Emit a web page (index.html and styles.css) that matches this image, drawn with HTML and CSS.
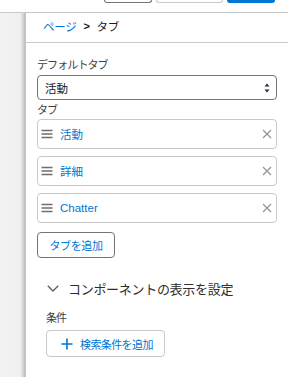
FILE: index.html
```html
<!DOCTYPE html>
<html lang="ja">
<head>
<meta charset="utf-8">
<link rel="stylesheet" href="styles.css">
</head>
<body>
<div class="topbar">
  <div class="tb-btn tb-neutral"></div>
  <div class="tb-btn tb-light"></div>
  <div class="tb-btn tb-brand"></div>
</div>
<div class="main">
  <div class="sidebar"></div>
  <div class="panel">
    <div class="crumbs">
      <span class="crumb-link">ページ</span>
      <span class="crumb-sep">&gt;</span>
      <span class="crumb-cur">タブ</span>
    </div>
    <div class="content">
      <div class="label">デフォルトタブ</div>
      <div class="select">
        <span>活動</span>
        <svg class="sel-arrows" width="6" height="10" viewBox="0 0 6 10"><path d="M3 0.5 L5.5 3.5 H0.5 Z M3 9.5 L5.5 6.5 H0.5 Z" fill="#1b2a3e"/></svg>
      </div>
      <div class="label label-tabs">タブ</div>
      <div class="tab-list">
        <div class="tab-item">
          <svg class="grip" width="12" height="10" viewBox="0 0 12 10"><path d="M0.5 1.5 H11.5 M0.5 5 H11.5 M0.5 8.5 H11.5" stroke="#706e6b" stroke-width="1.3"/></svg>
          <span class="tab-name">活動</span>
          <svg class="remove" width="10" height="10" viewBox="0 0 10 10"><path d="M1 1 L9 9 M9 1 L1 9" stroke="#939393" stroke-width="1.2"/></svg>
        </div>
        <div class="tab-item">
          <svg class="grip" width="12" height="10" viewBox="0 0 12 10"><path d="M0.5 1.5 H11.5 M0.5 5 H11.5 M0.5 8.5 H11.5" stroke="#706e6b" stroke-width="1.3"/></svg>
          <span class="tab-name">詳細</span>
          <svg class="remove" width="10" height="10" viewBox="0 0 10 10"><path d="M1 1 L9 9 M9 1 L1 9" stroke="#939393" stroke-width="1.2"/></svg>
        </div>
        <div class="tab-item">
          <svg class="grip" width="12" height="10" viewBox="0 0 12 10"><path d="M0.5 1.5 H11.5 M0.5 5 H11.5 M0.5 8.5 H11.5" stroke="#706e6b" stroke-width="1.3"/></svg>
          <span class="tab-name">Chatter</span>
          <svg class="remove" width="10" height="10" viewBox="0 0 10 10"><path d="M1 1 L9 9 M9 1 L1 9" stroke="#939393" stroke-width="1.2"/></svg>
        </div>
      </div>
      <button class="btn btn-add-tab">タブを追加</button>
      <div class="section">
        <div class="section-head">
          <svg class="chev" width="12" height="7" viewBox="0 0 12 7"><path d="M0.8 0.8 L6 6 L11.2 0.8" fill="none" stroke="#5c5c5c" stroke-width="1.3"/></svg>
          <span class="section-title">コンポーネントの表示を設定</span>
        </div>
        <div class="section-body">
          <div class="label">条件</div>
          <button class="btn btn-add-cond">
            <svg width="12" height="12" viewBox="0 0 12 12"><path d="M6 0.5 V11.5 M0.5 6 H11.5" stroke="#0176d3" stroke-width="1.6"/></svg>
            <span>検索条件を追加</span>
          </button>
        </div>
      </div>
    </div>
  </div>
</div>
</body>
</html>
```
FILE: styles.css
```css
* { box-sizing: border-box; }
html, body {
  margin: 0;
  padding: 0;
  width: 288px;
  height: 377px;
  overflow: hidden;
  background: #fff;
  font-family: "Liberation Sans", "Noto Sans CJK JP", sans-serif;
  color: #3e3e3c;
}
.topbar {
  height: 13px;
  border-bottom: 1px solid #c9c9c9;
  display: flex;
  justify-content: flex-end;
  align-items: flex-start;
  gap: 4px;
  padding-right: 13px;
}
.tb-btn {
  height: 3px;
  border: 1px solid #747474;
  border-top: none;
  border-radius: 0 0 4px 4px;
}
.tb-neutral { width: 48px; }
.tb-light { width: 67px; border-color: #c9c9c9; }
.tb-brand { width: 48px; background: #0176d3; border-color: #0176d3; }

.main {
  display: flex;
  height: 364px;
}
.sidebar {
  width: 26px;
  flex: none;
  background: linear-gradient(to right, #f3f3f3 0, #f0f0f0 20px, #d6d6d6 23px, #bdbdbd 25px, #c9c9c9 26px);
}
.panel {
  flex: 1;
  background: #fff;
}
.crumbs {
  height: 30px;
  border-bottom: 1px solid #c9c9c9;
  padding-left: 17px;
  display: flex;
  align-items: center;
  gap: 7px;
  font-size: 11.5px;
  letter-spacing: -0.3px;
  padding-bottom: 3px;
}
.crumb-link { color: #0176d3; }
.crumb-sep { color: #181818; font-weight: bold; font-size: 11px; }
.crumb-cur { color: #181818; }

.content {
  padding: 14px 11px 0 11px;
}
.label {
  font-size: 11px;
  line-height: 16px;
  letter-spacing: -0.9px;
  color: #3e3e3c;
}
.select {
  margin-top: 2px;
  height: 25px;
  border: 1px solid #747474;
  border-radius: 4px;
  display: flex;
  align-items: center;
  justify-content: space-between;
  padding: 0 6px 0 7px;
  font-size: 11.5px;
  color: #181818;
}
.label-tabs { margin-top: 2px; margin-bottom: 1px; }
.tab-list {
  display: flex;
  flex-direction: column;
  gap: 7px;
}
.tab-item {
  height: 30px;
  border: 1px solid #c9c9c9;
  border-radius: 4px;
  display: flex;
  align-items: center;
  padding: 0 4px 0 3px;
  font-size: 11.5px;
}
.grip { flex: none; }
.tab-name {
  flex: 1;
  margin-left: 7px;
  color: #0176d3;
}
.remove { flex: none; }

.btn {
  font-family: inherit;
  background: #fff;
  border-radius: 4px;
  cursor: pointer;
  display: flex;
  align-items: center;
  padding: 0;
}
.btn-add-tab {
  margin-top: 9px;
  width: 78px;
  height: 26px;
  border: 1px solid #747474;
  justify-content: center;
  font-size: 11px;
  letter-spacing: -0.4px;
  color: #0176d3;
}
.section {
  margin-top: 20px;
  padding-left: 9px;
}
.section-head {
  display: flex;
  align-items: center;
  height: 20px;
}
.chev { margin-left: 1px; flex: none; }
.section-title {
  margin-left: 9px;
  font-size: 13px;
  letter-spacing: -0.3px;
  color: #2e2e2e;
}
.section-body {
  margin-top: 12px;
}
.btn-add-cond {
  margin-top: 4px;
  width: 119px;
  height: 27px;
  border: 1px solid #c9c9c9;
  gap: 7px;
  padding-left: 14px;
  font-size: 11px;
  letter-spacing: -0.6px;
  color: #0176d3;
}
```
